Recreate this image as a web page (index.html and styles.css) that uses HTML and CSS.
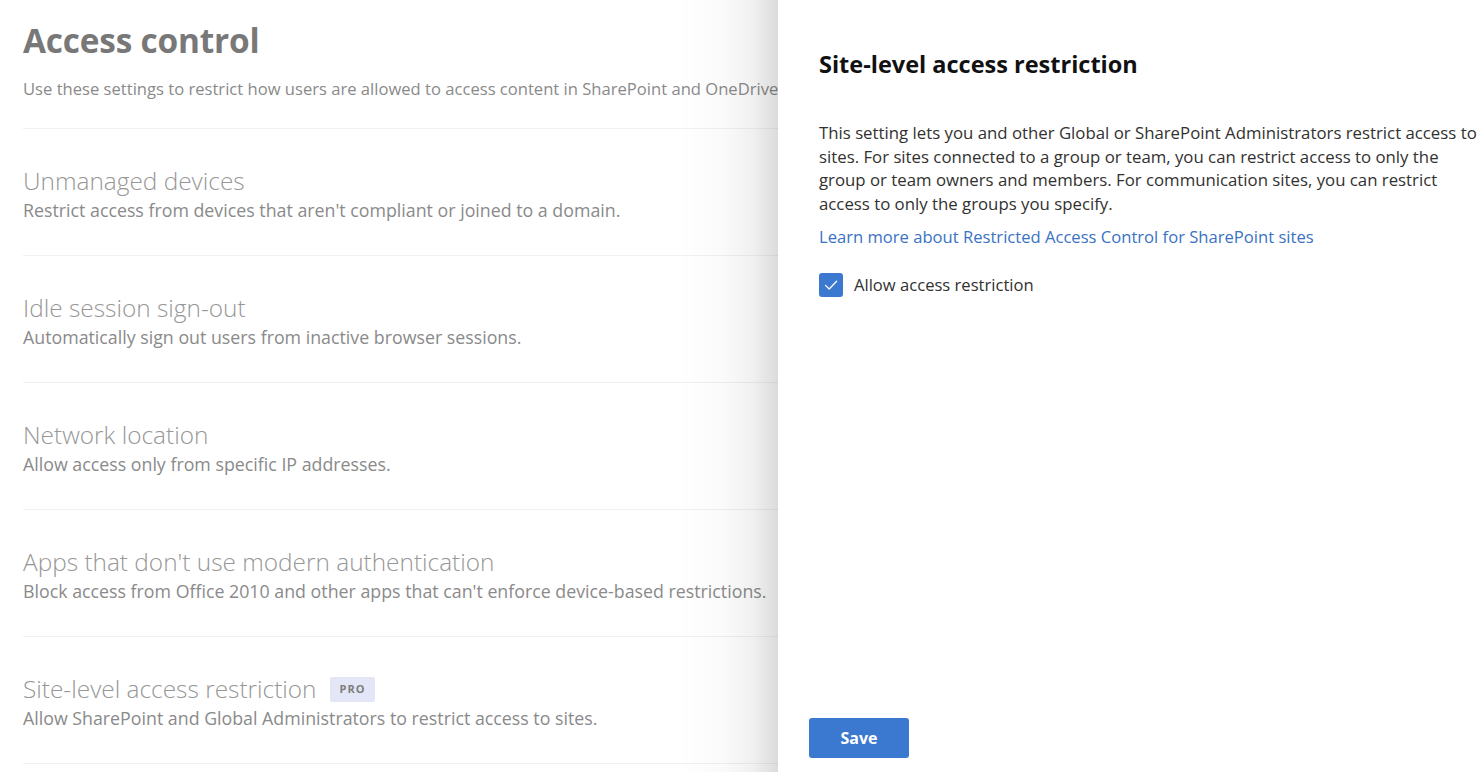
FILE: index.html
```html
<!DOCTYPE html>
<html lang="en">
<head>
<meta charset="utf-8">
<title>Access control</title>
<link rel="stylesheet" href="styles.css">
</head>
<body>
<div class="page">
  <main class="content">
    <h1 class="page-title">Access control</h1>
    <p class="page-sub">Use these settings to restrict how users are allowed to access content in SharePoint and OneDrive.</p>
    <ul class="settings">
      <li class="setting">
        <div class="setting-title">Unmanaged devices</div>
        <div class="setting-desc">Restrict access from devices that aren't compliant or joined to a domain.</div>
      </li>
      <li class="setting">
        <div class="setting-title">Idle session sign-out</div>
        <div class="setting-desc">Automatically sign out users from inactive browser sessions.</div>
      </li>
      <li class="setting">
        <div class="setting-title">Network location</div>
        <div class="setting-desc">Allow access only from specific IP addresses.</div>
      </li>
      <li class="setting">
        <div class="setting-title">Apps that don't use modern authentication</div>
        <div class="setting-desc">Block access from Office 2010 and other apps that can't enforce device-based restrictions.</div>
      </li>
      <li class="setting">
        <div class="setting-title">Site-level access restriction <span class="badge">PRO</span></div>
        <div class="setting-desc">Allow SharePoint and Global Administrators to restrict access to sites.</div>
      </li>
    </ul>
  </main>

  <aside class="panel">
    <h2 class="panel-title">Site-level access restriction</h2>
    <p class="panel-text">This setting lets you and other Global or SharePoint Administrators restrict access to sites. For sites connected to a group or team, you can restrict access to only the group or team owners and members. For communication sites, you can restrict access to only the groups you specify.</p>
    <a class="panel-link" href="#">Learn more about Restricted Access Control for SharePoint sites</a>
    <label class="check">
      <span class="check-box">
        <svg width="16" height="16" viewBox="0 0 16 16"><path d="M2.5 8.4 L6.2 12 L13.6 4.2" fill="none" stroke="#fff" stroke-width="1.3" stroke-linecap="round" stroke-linejoin="round"/></svg>
      </span>
      <span class="check-label">Allow access restriction</span>
    </label>
    <div class="panel-spacer"></div>
    <div class="panel-footer">
      <button class="btn-primary" type="button">Save</button>
    </div>
  </aside>
</div>
</body>
</html>
```

FILE: styles.css
```css
* { box-sizing: border-box; }
html, body { margin: 0; padding: 0; background: #fff; }
body {
  font-family: "Open Sans", "Noto Sans", sans-serif;
  color: #323130;
  width: 1483px;
  height: 772px;
  overflow: hidden;
}
.page {
  position: relative;
  width: 1483px;
  height: 772px;
  overflow: hidden;
}
.content {
  padding: 18px 0 0 23px;
  width: 1483px;
}
.page-title {
  margin: 0;
  font-size: 33.4px;
  line-height: 44px;
  font-weight: 700;
  color: #787878;
  letter-spacing: -0.2px;
}
.page-sub {
  margin: 16px 0 0;
  font-size: 16.6px;
  line-height: 22px;
  color: #8a8a8a;
  white-space: nowrap;
  padding-bottom: 28px;
  border-bottom: 1px solid #f1f1f1;
}
.settings {
  list-style: none;
  margin: 0;
  padding: 0;
}
.setting {
  padding: 36px 0 32px;
  border-bottom: 1px solid #f1f1f1;
  height: 127px;
}
.setting-title {
  font-size: 24.4px;
  line-height: 32px;
  font-weight: 300;
  color: #979797;
  display: flex;
  align-items: center;
  gap: 13px;
}
.setting-desc {
  margin-top: 0;
  font-size: 17.8px;
  line-height: 26px;
  color: #8a8a8a;
  white-space: nowrap;
}
.badge {
  display: inline-flex;
  align-items: center;
  justify-content: center;
  height: 25px;
  padding: 0 10px;
  background: #e3e6f6;
  border-radius: 2px;
  font-size: 11px;
  font-weight: 700;
  letter-spacing: 1px;
  color: #7c7c7c;
}
.panel {
  position: absolute;
  top: 0;
  right: 0;
  bottom: 0;
  width: 705px;
  background: #fff;
  padding: 46px 4px 14px 41px;
  display: flex;
  flex-direction: column;
}
.panel::before {
  content: "";
  position: absolute;
  top: 0;
  bottom: 0;
  left: -100px;
  width: 100px;
  background: linear-gradient(to right, rgba(0,0,0,0) 0%, rgba(0,0,0,0.02) 45%, rgba(0,0,0,0.06) 75%, rgba(0,0,0,0.14) 100%);
}
.panel-title {
  margin: 0;
  font-size: 23.5px;
  line-height: 36px;
  font-weight: 700;
  color: #111;
}
.panel-text {
  margin: 39px 0 0;
  font-size: 16.8px;
  line-height: 23.5px;
  color: #323130;
}
.panel-link {
  margin-top: 10px;
  font-size: 16.6px;
  line-height: 24px;
  color: #3a72c4;
  text-decoration: none;
  align-self: flex-start;
}
.check {
  margin-top: 24px;
  display: flex;
  align-items: center;
  gap: 11px;
}
.check-box {
  width: 24px;
  height: 24px;
  border-radius: 3px;
  background: #3b78d0;
  display: flex;
  align-items: center;
  justify-content: center;
}
.check-label {
  font-size: 16.6px;
  line-height: 24px;
  color: #323130;
}
.panel-spacer { flex: 1; }
.panel-footer {
  margin-left: -10px;
}
.btn-primary {
  width: 100px;
  height: 40px;
  border: none;
  border-radius: 3px;
  background: #3b78d0;
  color: #fff;
  font-family: inherit;
  font-size: 16px;
  font-weight: 700;
}
```
